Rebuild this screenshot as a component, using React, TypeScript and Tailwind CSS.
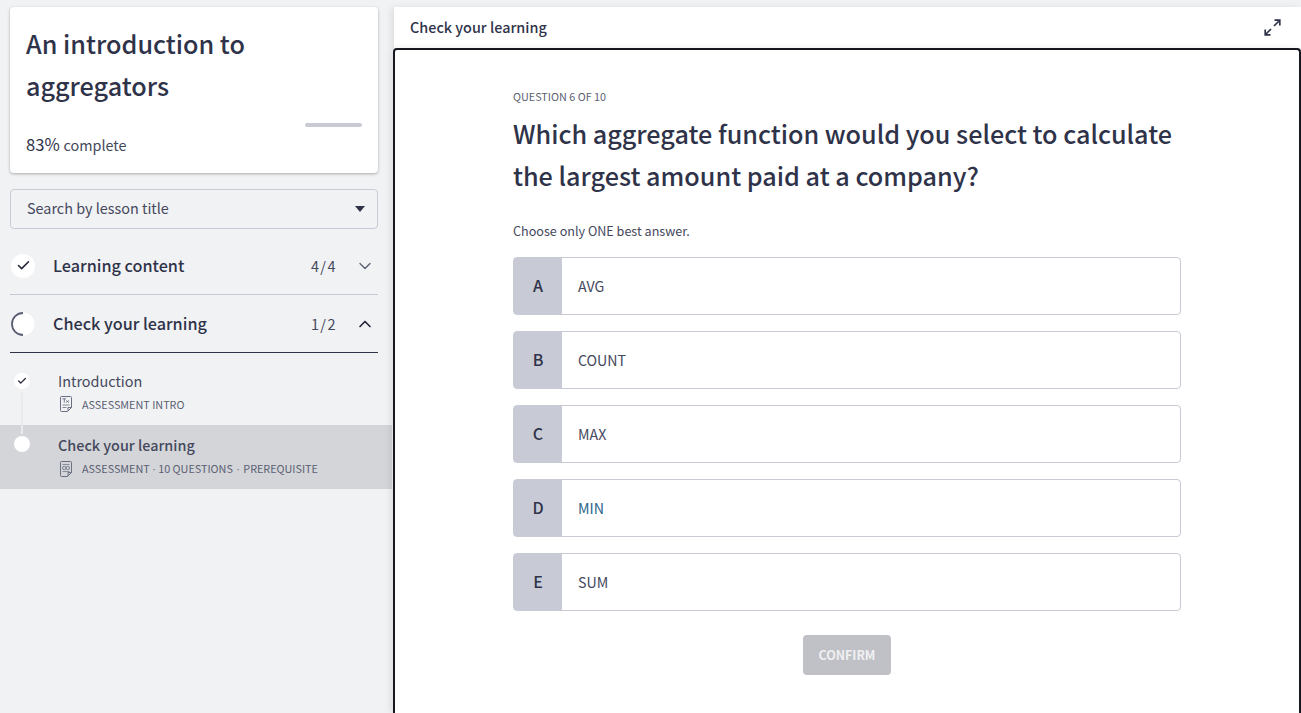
import { Check, ChevronDown, ChevronUp } from "lucide-react";

const font = { fontFamily: '"Noto Sans CJK SC", "Noto Sans", sans-serif' };

function DocIcon({ kind }: { kind: "tx" | "oo" }) {
  return (
    <svg width="12" height="16" viewBox="0 0 12 16" fill="none" stroke="#6b6f82" strokeWidth="1" className="shrink-0">
      <path d="M1.500 0.500H10.500a1 1 0 0 1 1 1V11.500L7.500 15.500H1.500a1 1 0 0 1-1-1V1.500a1 1 0 0 1 1-1Z" />
      <path d="M11.500 11.500H8V15" />
      {kind === "tx" ? (
        <>
          <path d="M2.500 2.800H6M4.300 2.800V6.500M6.200 4.500L8.800 6.500M8.800 4.500L6.200 6.500" strokeWidth="0.9" />
          <path d="M2.500 9H9.500M2.500 11.500H6.500" strokeWidth="0.8" />
        </>
      ) : (
        <>
          <path d="M2.500 3.500H9.500" strokeWidth="0.7" />
          <circle cx="4.200" cy="7" r="1.700" strokeWidth="0.8" />
          <circle cx="7.800" cy="7" r="1.700" strokeWidth="0.8" />
          <path d="M2.500 10.500H9.500" strokeWidth="0.7" />
        </>
      )}
    </svg>
  );
}

function Answer({ letter, text, color }: { letter: string; text: string; color: string }) {
  return (
    <div className="flex h-[58px] rounded-sm border border-[#c8cad5] bg-white">
      <div className="flex w-[48px] items-center justify-center bg-[#c8cad5] pb-[2px] text-[16px] font-medium text-[#2f3349]">{letter}</div>
      <div className={`flex items-center pt-[1px] pl-[16px] text-[14.2px] ${color}`}>{text}</div>
    </div>
  );
}

export default function App() {
  return (
    <div style={font} className="flex h-[713px] overflow-hidden bg-[#f1f2f4] text-[#2f3349]">
      <aside className="flex w-[393px] shrink-0 flex-col pt-[7px]">
        <div className="mx-[10px] w-[368px]">
          <section className="h-[166px] rounded bg-white px-[16px] pt-[15px] shadow-[0_1px_3px_rgba(0,0,0,0.3)]">
            <h1 className="text-[25.2px] leading-[42px] font-medium text-[#2f3349]">An introduction to aggregators</h1>
            <div className="mt-[17px] flex justify-end">
              <div className="h-[4px] w-[57px] rounded-sm bg-[#c8cad5]" />
            </div>
            <p className="mt-[5px] text-[16.6px] leading-[24px]">
              <span>83%</span> <span className="text-[14.4px] text-[#44485c]">complete</span>
            </p>
          </section>
          <div className="mt-[16px] flex h-[40px] items-center justify-between rounded border border-[#c8cad5] pr-[12px] pl-[16px] text-[14.4px] text-[#44485c]">
            <span className="-mt-[2px]">Search by lesson title</span>
            <span className="h-0 w-0 border-x-[5px] border-t-[6px] border-x-transparent border-t-[#2f3349]" />
          </div>
          <div className="mt-[8px] flex h-[58px] items-center border-b border-[#c8cad5]">
            <span className="ml-[1px] flex h-[24px] w-[24px] items-center justify-center rounded-full bg-white">
              <Check size={15} strokeWidth={2.5} className="text-[#23263a]" />
            </span>
            <span className="-mt-[1px] ml-[18px] flex-1 text-[16.2px] font-medium">Learning content</span>
            <span className="ml-[1px] text-[14.4px] tracking-[1.500px] text-[#44485c]">4/4</span>
            <ChevronDown size={20} strokeWidth={1.6} className="mr-[3px] ml-[18px] text-[#5b5f73]" />
          </div>
          <div className="flex h-[58px] items-center border-b border-[#2f3349]">
            <svg width="24" height="24" viewBox="0 0 24 24" fill="none" className="ml-[1px] shrink-0">
              <circle cx="12" cy="12" r="11.500" fill="#ffffff" />
              <path d="M12 1A11 11 0 0 0 12 23" stroke="#5b5f73" strokeWidth="1.800" />
            </svg>
            <span className="-mt-[1px] ml-[18px] flex-1 text-[16.2px] font-medium">Check your learning</span>
            <span className="ml-[1px] text-[14.4px] tracking-[1.500px] text-[#44485c]">1/2</span>
            <ChevronUp size={20} strokeWidth={2} className="mr-[3px] ml-[18px] text-[#23263a]" />
          </div>
        </div>
        <div className="relative mt-[12px] flex h-[60px] w-[392px]">
          <span className="absolute top-[28px] left-[21px] z-10 h-[41px] w-[2px] bg-[#e9eaee]" />
          <div className="w-[48px] shrink-0 pt-[8px] pl-[14px]">
            <span className="flex h-[16px] w-[16px] items-center justify-center rounded-full bg-white">
              <Check size={10} strokeWidth={3} className="text-[#23263a]" />
            </span>
          </div>
          <div className="pl-[10px]">
            <div className="mt-[5px] text-[14.4px] leading-[22px] text-[#44485c]">Introduction</div>
            <div className="mt-[4px] flex items-center text-[10.8px] leading-[16px] text-[#5b5f73]">
              <span className="ml-[2px]"><DocIcon kind="tx" /></span>
              <span className="ml-[10px]">ASSESSMENT INTRO</span>
            </div>
          </div>
        </div>
        <div className="flex h-[64px] w-[392px] bg-[#d4d5d9]">
          <div className="w-[48px] shrink-0 pt-[11px] pl-[14px]">
            <span className="block h-[16px] w-[16px] rounded-full bg-white" />
          </div>
          <div className="pl-[10px]">
            <div className="mt-[9px] text-[14.4px] leading-[22px] font-medium text-[#44485c]">Check your learning</div>
            <div className="mt-[4px] flex items-center text-[10.8px] leading-[16px] text-[#5b5f73]">
              <span className="ml-[2px]"><DocIcon kind="oo" /></span>
              <span className="ml-[10px]">
                ASSESSMENT <span className="font-['Liberation_Sans']">·</span> 10 QUESTIONS <span className="mx-[1px] font-['Liberation_Sans']">·</span> PREREQUISITE
              </span>
            </div>
          </div>
        </div>
      </aside>

      <main className="mt-[7px] flex min-w-0 flex-1 flex-col">
        <header className="ml-[1px] flex h-[41px] shrink-0 items-center justify-between bg-white pr-[20px] pl-[16px] shadow-[-3px_0_6px_rgba(0,0,0,0.08)]">
          <span className="mt-[-1px] text-[14.4px] font-medium text-[#2f3349]">Check your learning</span>
          <svg width="17" height="17" viewBox="0 0 17 17" fill="none" stroke="#2f3349" strokeWidth="1.700" className="-mt-[1px]">
            <path d="M10 7L15.500 1.500M10.500 1.200H15.800V6.500M7 10L1.500 15.500M1.200 10.500V15.800H6.500" />
          </svg>
        </header>
        <div className="flex flex-1 justify-center rounded-t border-x-2 border-t-2 border-[#16171f] bg-white pt-[38px] shadow-[-3px_0_6px_rgba(0,0,0,0.08)]">
          <div className="w-[668px]">
            <div className="text-[10.8px] leading-[16px] text-[#5b5f73]">QUESTION 6 OF 10</div>
            <h2 className="mt-[8px] text-[25.2px] leading-[42px] font-medium text-[#2f3349]">
              Which aggregate function would you select to calculate the largest amount paid at a company?
            </h2>
            <p className="mt-[25px] text-[12.6px] leading-[20px] text-[#44485c]">Choose only ONE best answer.</p>
            <div className="mt-[16px] flex flex-col gap-[16px]">
              <Answer letter="A" text="AVG" color="text-[#44485c]" />
              <Answer letter="B" text="COUNT" color="text-[#44485c]" />
              <Answer letter="C" text="MAX" color="text-[#44485c]" />
              <Answer letter="D" text="MIN" color="text-[#2a6488]" />
              <Answer letter="E" text="SUM" color="text-[#44485c]" />
            </div>
            <div className="mt-[24px] flex justify-center">
              <button className="h-[40px] w-[88px] rounded bg-[#c0c1c7] text-[12.4px] font-bold text-[#f0f0f2]">CONFIRM</button>
            </div>
          </div>
        </div>
      </main>
    </div>
  );
}
